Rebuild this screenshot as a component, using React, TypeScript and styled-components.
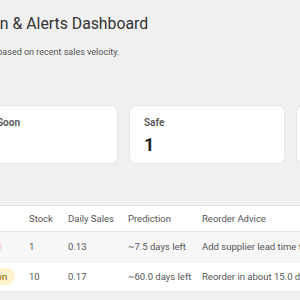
import styled, { createGlobalStyle } from 'styled-components'

const GlobalStyle = createGlobalStyle`
  body {
    margin: 0;
    background: #f0f0f0;
    font-family: "Segoe UI", Roboto, "Noto Sans", sans-serif;
    color: #333;
    overflow: hidden;
  }
`

const Page = styled.div`
  width: 655px;
  margin-left: -204px;
  padding-top: 15px;
`

const Title = styled.h1`
  margin: 0;
  font-size: 15.8px;
  line-height: 18px;
  font-weight: 400;
  color: #333;
  white-space: nowrap;
`

const Subtitle = styled.p`
  margin: 13px 0 0;
  font-size: 9px;
  line-height: 12px;
  color: #555;
  white-space: nowrap;
`

const Cards = styled.div`
  display: grid;
  grid-template-columns: repeat(4, 154px);
  gap: 13px;
  margin-top: 48px;
`

const Card = styled.div`
  background: #fff;
  border-radius: 6px;
  box-shadow: 0 0 0 1px #e6e6e6;
  padding: 11px 14px 0;
  height: 57px;
  box-sizing: border-box;
`

const CardLabel = styled.div`
  font-size: 10px;
  line-height: 12px;
  font-weight: 600;
  color: #555;
`

const CardValue = styled.div`
  margin-top: 6px;
  font-size: 18px;
  font-weight: 700;
  color: #222;
  line-height: 20px;
`

const Table = styled.table`
  margin-top: 42px;
  width: 100%;
  table-layout: fixed;
  border-collapse: collapse;
  background: #fff;
  border-top: 1px solid #e4e4e4;
  border-bottom: 1px solid #e4e4e4;
  font-size: 9.5px;
  color: #555;
`

const Th = styled.th`
  text-align: left;
  font-weight: 400;
  padding: 0 10px;
  height: 25px;
  border-bottom: 1px solid #e4e4e4;
  white-space: nowrap;
`

const Row = styled.tr<{ $shade?: boolean }>`
  background: ${({ $shade }) => ($shade ? '#f7f7f7' : '#fff')};
  border-bottom: 1px solid #ececec;
`

const Td = styled.td`
  padding: 0 10px;
  height: 29px;
  white-space: nowrap;
  overflow: hidden;
`

const Badge = styled.span<{ $tone: 'danger' | 'warn' }>`
  display: inline-block;
  padding: 2px 8px;
  border-radius: 10px;
  font-size: 9.5px;
  line-height: 13px;
  background: ${({ $tone }) => ($tone === 'danger' ? '#fde0e0' : '#fff3cd')};
  color: ${({ $tone }) => ($tone === 'danger' ? '#b42318' : '#7a5a00')};
`

const cards = [
  { label: 'Critical', value: 1 },
  { label: 'Due Soon', value: 1 },
  { label: 'Safe', value: 1 },
  { label: 'Total Products', value: 3 },
]

const rows = [
  { name: 'Blue Mug', status: 'Low Stock', tone: 'danger' as const, stock: 1, sales: '0.13', prediction: '~7.5 days left', advice: 'Add supplier lead time to plan reorder' },
  { name: 'Tote Bag', status: 'Reorder Soon', tone: 'warn' as const, stock: 10, sales: '0.17', prediction: '~60.0 days left', advice: 'Reorder in about 15.0 days' },
]

const App = () => (
  <>
    <GlobalStyle />
    <Page>
      <Title>Inventory Stock-Out Prediction &amp; Alerts Dashboard</Title>
      <Subtitle>Estimates when each product will run out of stock based on recent sales velocity.</Subtitle>
      <Cards>
        {cards.map(card => (
          <Card key={card.label}>
            <CardLabel>{card.label}</CardLabel>
            <CardValue>{card.value}</CardValue>
          </Card>
        ))}
      </Cards>
      <Table>
        <colgroup>
          <col style={{ width: 136 }} />
          <col style={{ width: 87 }} />
          <col style={{ width: 39 }} />
          <col style={{ width: 60 }} />
          <col style={{ width: 74 }} />
          <col />
        </colgroup>
        <thead>
          <tr>
            <Th>Product</Th>
            <Th>Status</Th>
            <Th>Stock</Th>
            <Th>Daily Sales</Th>
            <Th>Prediction</Th>
            <Th>Reorder Advice</Th>
          </tr>
        </thead>
        <tbody>
          {rows.map((row, index) => (
            <Row key={row.name} $shade={index % 2 === 0}>
              <Td>{row.name}</Td>
              <Td><Badge $tone={row.tone}>{row.status}</Badge></Td>
              <Td>{row.stock}</Td>
              <Td>{row.sales}</Td>
              <Td>{row.prediction}</Td>
              <Td>{row.advice}</Td>
            </Row>
          ))}
        </tbody>
      </Table>
    </Page>
  </>
)

export default App
